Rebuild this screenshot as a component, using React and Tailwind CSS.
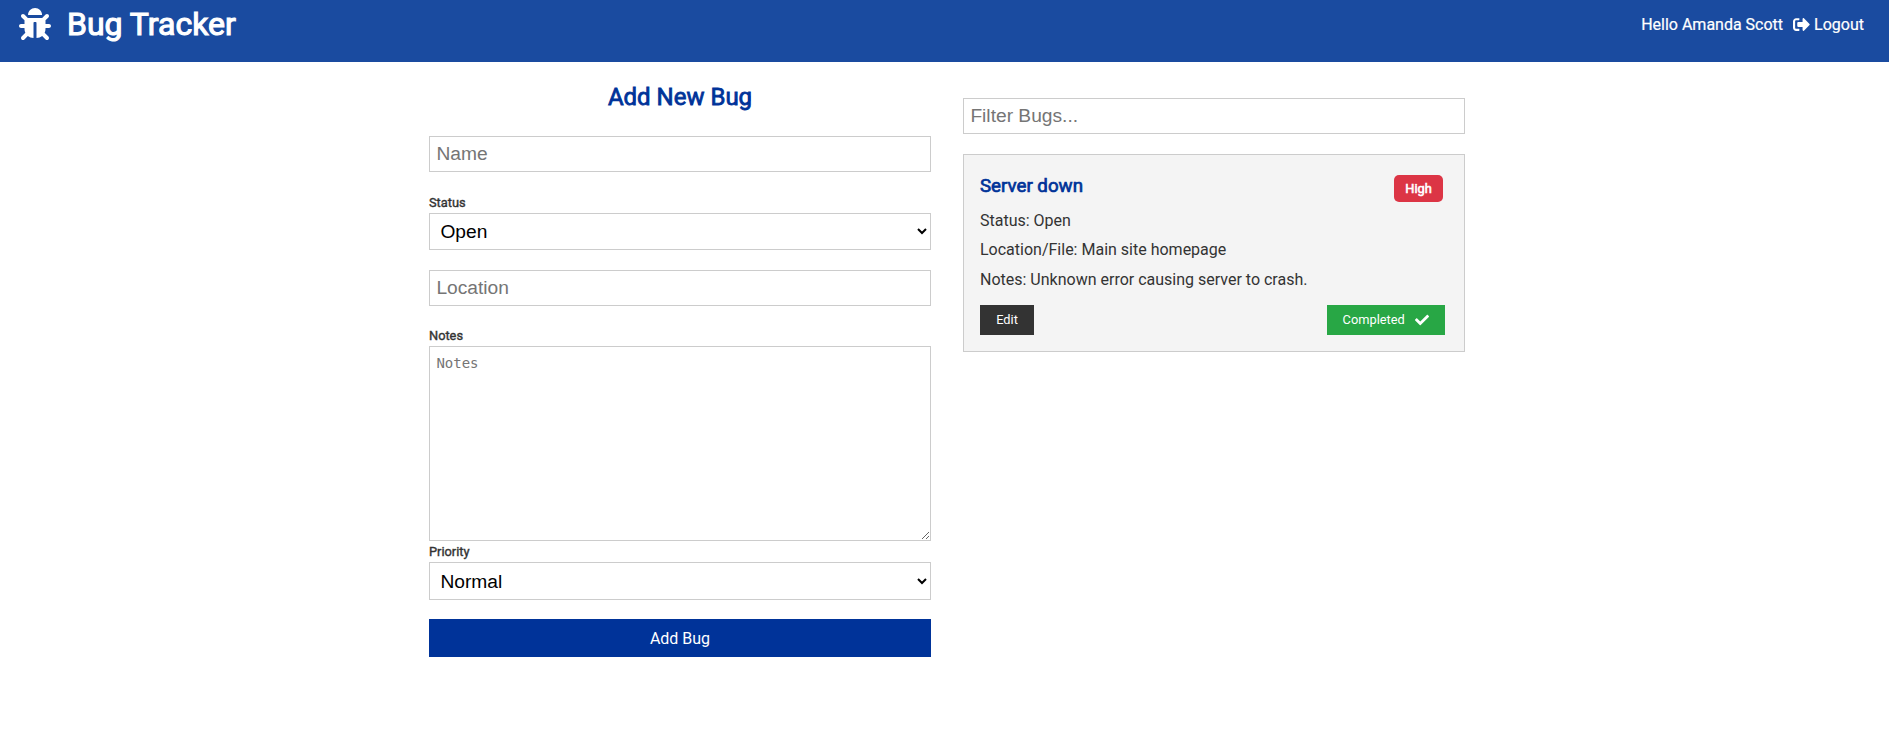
import { FaBug, FaSignOutAlt, FaCheck } from "react-icons/fa";

const field =
  "block w-full border border-[#ccc] bg-white px-[6.4px] font-['Liberation_Sans',Arial,sans-serif] text-[19.2px] leading-[22px] placeholder:text-[#757575] placeholder:opacity-100 outline-none rounded-none";
const label = "block text-[12.8px] leading-[20px] [-webkit-text-stroke:0.4px_#333]";

function Header() {
  return (
    <header className="flex h-[62px] items-start justify-between bg-[#1a4ba0] pl-[19px] pr-[25px] text-white">
      <h1 className="flex items-center text-[32px] leading-[48px] [-webkit-text-stroke:1.1px_white]">
        <FaBug className="mr-4 h-8 w-8 [-webkit-text-stroke:0]" />
        Bug Tracker
      </h1>
      <nav className="flex items-center pt-[13px] text-base leading-6">
        <span className="mr-[10px] [-webkit-text-stroke:0.2px_white]">Hello Amanda Scott</span>
        <a href="#" className="flex items-center gap-1 [-webkit-text-stroke:0.2px_white]">
          <FaSignOutAlt className="mb-px h-[17px] w-[17px]" />
          Logout
        </a>
      </nav>
    </header>
  );
}

function BugForm() {
  return (
    <form className="flex w-[502px] flex-col">
      <h2 className="mt-[15px] text-center text-2xl leading-[40px] text-[#003399] [-webkit-text-stroke:0.8px_#003399]">
        Add New Bug
      </h2>
      <input className={`${field} mt-[19px] h-9`} placeholder="Name" />
      <label className={`${label} mt-[21px]`}>Status</label>
      <select className={`${field} h-[37px] text-black`} defaultValue="Open">
        <option>Open</option>
        <option>Closed</option>
      </select>
      <input className={`${field} mt-5 h-9`} placeholder="Location" />
      <label className={`${label} mt-5`}>Notes</label>
      <textarea
        className="block h-[195px] w-full resize border border-[#ccc] bg-white px-[6.4px] py-[7px] font-['DejaVu_Sans_Mono',monospace] text-[14px] leading-[19px] outline-none placeholder:text-[#757575] placeholder:opacity-100"
        placeholder="Notes"
      />
      <label className={`${label} mt-px`}>Priority</label>
      <select className={`${field} h-[38px] text-black`} defaultValue="Normal">
        <option>Low</option>
        <option>Normal</option>
        <option>High</option>
      </select>
      <button type="button" className="mt-[19px] h-[38px] w-full bg-[#003399] pt-[2px] text-base text-white">
        Add Bug
      </button>
    </form>
  );
}

function BugCard() {
  return (
    <article className="mt-5 h-[198px] border border-[#ccc] bg-[#f4f4f4] px-4 pt-4">
      <div className="flex items-start justify-between">
        <h3 className="text-[18.72px] leading-[30px] text-[#003399] [-webkit-text-stroke:0.7px_#003399]">Server down</h3>
        <span className="mr-[5px] mt-1 flex h-[27px] w-[49px] items-center justify-center rounded-[5px] bg-[#dc3545] text-[12.8px] text-white [-webkit-text-stroke:0.6px_white]">
          High
        </span>
      </div>
      <ul className="mt-[6px] text-base">
        <li className="mb-1 leading-[25px]">Status: Open</li>
        <li className="mb-1 leading-[26px]">Location/File: Main site homepage</li>
        <li className="leading-[26px]">Notes: Unknown error causing server to crash.</li>
      </ul>
      <div className="mt-3 flex justify-between pr-[3px] text-[12.8px] text-white">
        <button type="button" className="h-[30px] w-[54px] bg-[#333]">Edit</button>
        <button type="button" className="flex h-[30px] w-[118px] items-center gap-[10px] bg-[#28a745] pl-[15.6px]">
          Completed
          <FaCheck className="h-[14px] w-[14px]" />
        </button>
      </div>
    </article>
  );
}

export default function App() {
  return (
    <div className="min-h-screen bg-white font-[Roboto,sans-serif] text-[#333]">
      <Header />
      <main className="flex gap-8 pl-[429px]">
        <BugForm />
        <section className="w-[502px] pt-9">
          <input className={`${field} h-9`} placeholder="Filter Bugs..." />
          <BugCard />
        </section>
      </main>
    </div>
  );
}
